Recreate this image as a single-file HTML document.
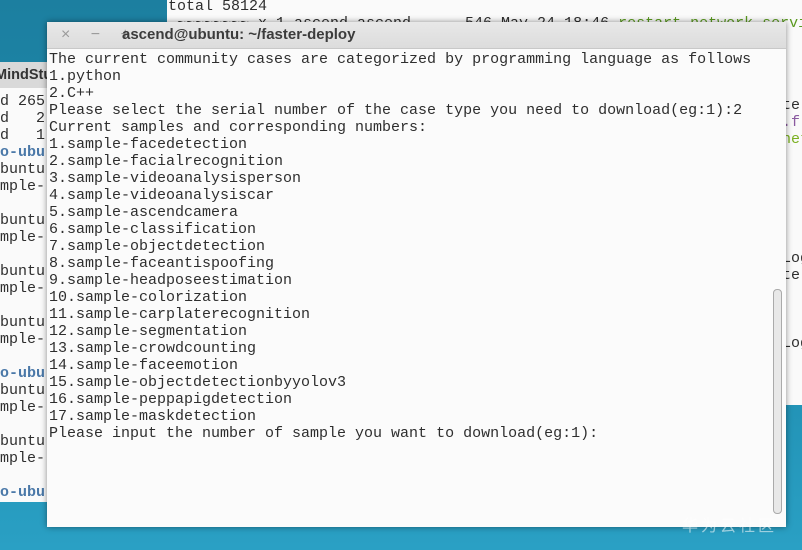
<!DOCTYPE html>
<html><head><style>
body{margin:0;width:802px;height:550px;overflow:hidden;position:relative;background:linear-gradient(180deg,#1c7fa0 0%,#1f8db0 60%,#2aa0c4 100%);font-family:"Liberation Mono",monospace;}
.mono{font-family:"Liberation Mono",monospace;font-size:15px;line-height:17px;white-space:pre;color:#2e2e2e;}
#back{position:absolute;left:167px;top:-5px;width:640px;height:410px;background:#fafafa;}
#left{position:absolute;left:0;top:62px;width:60px;height:440px;background:#fafafa;}
#lefttitle{position:absolute;left:-5px;top:0;width:65px;height:26px;background:#d9d9d9;font-family:"Liberation Sans",sans-serif;font-weight:bold;font-size:14.5px;line-height:26px;color:#333;}
#main{position:absolute;left:47px;top:22px;width:739px;height:505px;background:#fbfbfb;box-shadow:0 0 6px rgba(0,0,0,.45);}
#title{height:26px;background:linear-gradient(#e8e8e8,#dcdcdc);border-bottom:1px solid #c8c8c8;font-family:"Liberation Sans",sans-serif;font-size:15px;font-weight:bold;color:#3c3c3c;line-height:26px;position:relative;}
#btns{position:absolute;left:14px;top:0;color:#9a9a9a;font-weight:normal;font-size:16px;letter-spacing:8px}
#scroll{position:absolute;left:726px;top:267px;width:7px;height:223px;border:1px solid #aaa;border-radius:4px;background:#e8e8e8;}
#wm{position:absolute;left:682px;top:512px;color:rgba(255,255,255,.55);font-family:"Noto Sans CJK SC",sans-serif;font-size:16px;letter-spacing:3px}
</style></head><body>
<div id="back"><div class="mono" style="position:absolute;left:1px;top:3px">total 58124
 ~~~~~~~~ x 1 ascend ascend      546 May 24 18:46 <span style="color:#5a9a20">restart_network_service</span></div>
<div class="mono" style="position:absolute;left:615px;top:102px;line-height:17px">te
<span style="color:#8a5aa0">.f</span>
<span style="color:#7ab020">net</span>






Log
te



Log</div></div>
<div id="left"><div id="lefttitle">MindStu</div>
<div class="mono" style="position:absolute;left:0;top:31px;line-height:17px">d 265
d   2
d   1
<span style="color:#4a78a8;font-weight:bold">o-ubu</span>
buntu
mple-

buntu
mple-

buntu
mple-

buntu
mple-

<span style="color:#4a78a8;font-weight:bold">o-ubu</span>
buntu
mple-

buntu
mple-

<span style="color:#4a78a8;font-weight:bold">o-ubu</span></div></div>
<div id="main">
<div id="title"><span id="btns">× − +</span><span style="position:absolute;left:75px">ascend@ubuntu: ~/faster-deploy</span></div>
<div class="mono" style="position:absolute;left:2px;top:29px">The current community cases are categorized by programming language as follows
1.python
2.C++
Please select the serial number of the case type you need to download(eg:1):2
Current samples and corresponding numbers:
1.sample-facedetection
2.sample-facialrecognition
3.sample-videoanalysisperson
4.sample-videoanalysiscar
5.sample-ascendcamera
6.sample-classification
7.sample-objectdetection
8.sample-faceantispoofing
9.sample-headposeestimation
10.sample-colorization
11.sample-carplaterecognition
12.sample-segmentation
13.sample-crowdcounting
14.sample-faceemotion
15.sample-objectdetectionbyyolov3
16.sample-peppapigdetection
17.sample-maskdetection
Please input the number of sample you want to download(eg:1):</div>
<div id="scroll"></div>
</div>
<div id="wm">华为云社区</div>
</body></html>
